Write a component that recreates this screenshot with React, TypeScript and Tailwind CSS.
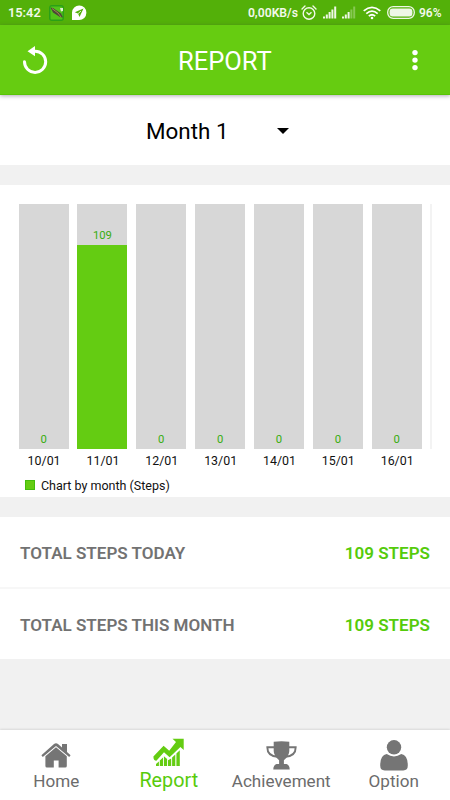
import { ReactNode } from "react";

const days = [
  { date: "10/01", steps: 0 },
  { date: "11/01", steps: 109 },
  { date: "12/01", steps: 0 },
  { date: "13/01", steps: 0 },
  { date: "14/01", steps: 0 },
  { date: "15/01", steps: 0 },
  { date: "16/01", steps: 0 },
];

const CHART_MAX = 131;

function SignalIcon({ strength }: { strength: number }) {
  return (
    <svg width="14" height="13" viewBox="0 0 14 13" fill="#fff">
      {[2, 4, 6.5, 9, 12].map((h, i) => (
        <rect
          key={h}
          x={i * 2.8}
          y={12.5 - h}
          width="2"
          height={h}
          opacity={i < strength ? 0.9 : 0.3}
        />
      ))}
    </svg>
  );
}

function StatusBar() {
  return (
    <div className="h-[25px] shrink-0 bg-[#53b009] flex items-center pl-[8px] pr-[8px] text-[12.2px] font-semibold text-[#f2f9ea]">
      <span className="w-[34px] pt-px text-[12.8px]">15:42</span>
      <svg className="ml-[7px]" width="15" height="16" viewBox="0 0 15 16">
        <rect width="15" height="16" rx="3" fill="#2aa017" />
        <rect x="1.5" y="1.5" width="12" height="13" rx="1" fill="#53c41a" />
        <path d="M1.5 2.5L4 3L12 8.5L14 12.5L11 12L4 7.5Z" fill="#4b4638" />
        <path d="M3 3.5L9 8L12 12" stroke="#b99a55" strokeWidth=".8" fill="none" />
        <path d="M11 3h3v3l-2 .5z" fill="#dff2d4" />
      </svg>
      <svg className="ml-[8px]" width="15" height="15" viewBox="0 0 15 15">
        <path d="M0 15V7.5A7.2 7.3 0 1 1 7.2 15Z" fill="#fff" />
        <path d="M11.5 3.5L2.8 7.3L6 8.5L7.5 12Z" fill="#53b009" />
        <path d="M6 8.7L9 6" stroke="#fff" strokeWidth=".8" />
      </svg>
      <span className="ml-auto pt-px">0,00KB/s</span>
      <svg className="ml-[3px]" width="16" height="16" viewBox="0 0 16 16" fill="none" stroke="#f2f9ea" strokeWidth="1.4">
        <circle cx="8" cy="8.5" r="5.8" />
        <path d="M1 4L4 1M15 4L12 1" strokeLinecap="round" />
        <path d="M5.5 7.2L8 9.5L10.5 7.2" />
      </svg>
      <div className="ml-[6px] flex gap-[5px]">
        <SignalIcon strength={5} />
        <SignalIcon strength={3} />
      </div>
      <svg className="ml-[7px]" width="18" height="14" viewBox="0 0 18 14" fill="none" stroke="#fff" strokeWidth="1.7">
        <path d="M.7 4.8Q9-2.2 17.3 4.8" />
        <path d="M3.3 7.6Q9 2.7 14.7 7.6" />
        <path d="M5.8 10.1Q9 7.4 12.2 10.1" />
        <circle cx="9" cy="12" r="1.3" fill="#fff" stroke="none" />
      </svg>
      <svg className="ml-[6px]" width="28" height="13" viewBox="0 0 28 13">
        <rect x=".7" y=".7" width="26.6" height="11.6" rx="5.5" fill="none" stroke="#eef7e6" strokeWidth="1.3" />
        <rect x="2.6" y="2.6" width="22.8" height="7.8" rx="3" fill="#eef7e6" />
      </svg>
      <span className="ml-[4px] w-[23px] pt-px whitespace-nowrap text-[12px]">96%</span>
    </div>
  );
}

function Header() {
  return (
    <header className="relative z-10 h-[70px] shrink-0 bg-[#66cc11] border-b border-[#58c506] shadow-[0_1px_4px_rgba(60,40,70,0.4)] grid grid-cols-[156px_1fr_35px] items-center pl-[22px] text-white">
      <svg width="26" height="29" viewBox="0 0 26 29">
        <path d="M2.5 16.7A10.6 10.6 0 1 0 13 6.2H11" fill="none" stroke="#fff" strokeWidth="3" strokeLinecap="round" />
        <path d="M5.5 6.2L13 1V11.2Z" fill="#fff" />
      </svg>
      <h1 className="pt-[5px] text-[25.5px] leading-none">REPORT</h1>
      <svg className="-ml-[5px]" width="10" height="22" viewBox="0 0 10 22" fill="#fff">
        <circle cx="5" cy="3.6" r="2.7" />
        <circle cx="5" cy="11.1" r="2.7" />
        <circle cx="5" cy="18.6" r="2.7" />
      </svg>
    </header>
  );
}

function Chart() {
  return (
    <div className="mt-[20px] h-[312px] shrink-0 bg-white pt-[19px] pl-[18.6px] overflow-hidden">
      <div className="flex gap-[8.85px]">
        {days.map((day) => (
          <div key={day.date} className="w-[50px] shrink-0">
            <div className="h-[244.5px] bg-[#d7d7d7] flex flex-col justify-end">
              <div className="text-center text-[11.3px] leading-[14px] pb-[2px] text-[#36ad0e]">
                {day.steps}
              </div>
              <div
                className="bg-[#64cc12]"
                style={{ height: `${(day.steps / CHART_MAX) * 100}%` }}
              />
            </div>
            <div className="mt-[4px] pl-px text-center text-[12.4px] leading-[15px] text-[#111]">
              {day.date}
            </div>
          </div>
        ))}
        <div className="h-[244.5px] w-[1.5px] -ml-[0.5px] shrink-0 bg-[#f3f3f3]" />
      </div>
      <div className="mt-[10px] ml-[6.4px] flex items-center gap-[6px] text-[12.5px] leading-[16px] text-[#111]">
        <span className="size-[10px] -mt-px bg-[#64cc12] border border-[#43bd0b]" />
        Chart by month (Steps)
      </div>
    </div>
  );
}

function TotalRow({ label, value }: { label: string; value: string }) {
  return (
    <div className="h-[70px] flex items-center justify-between px-[20px] pt-[2px] text-[17.05px] leading-[20px] font-semibold">
      <span className="text-[#727272]">{label}</span>
      <span className="text-[#55cb0b]">{value}</span>
    </div>
  );
}

function NavItem({
  label,
  active,
  children,
}: {
  label: string;
  active?: boolean;
  children: ReactNode;
}) {
  return (
    <div
      className={
        active
          ? "flex flex-col items-center pt-[8px] text-[#58cb0b] text-[19.8px] leading-[22px]"
          : "flex flex-col items-center pt-[9px] text-[#6c6c6c] text-[17.1px] leading-[20px]"
      }
    >
      <div className="h-[32px] flex">{children}</div>
      <span>{label}</span>
    </div>
  );
}

export default function App() {
  return (
    <div className="w-[450px] h-[800px] overflow-hidden bg-[#f1f1f1] flex flex-col font-['Roboto',sans-serif]">
      <StatusBar />
      <Header />
      <div className="h-[70px] shrink-0 bg-white flex items-center pl-[146px] text-[22.4px] text-black">
        <span className="w-[131px] pt-[4px]">Month 1</span>
        <svg className="mt-[2px]" width="12" height="6" viewBox="0 0 12 6">
          <path d="M0 0H12L6 6Z" />
        </svg>
      </div>
      <Chart />
      <div className="mt-[20px] shrink-0 bg-white">
        <TotalRow label="TOTAL STEPS TODAY" value="109 STEPS" />
        <div className="h-[2px] bg-[#f7f7f7]" />
        <TotalRow label="TOTAL STEPS THIS MONTH" value="109 STEPS" />
      </div>
      <nav className="mt-auto h-[70px] shrink-0 bg-white shadow-[0_-1px_2px_rgba(0,0,0,0.1)] grid grid-cols-4">
        <NavItem label="Home">
          <svg className="mt-[4px]" width="30" height="25" viewBox="0 0 30 25" fill="#757575">
            <path d="M15 .2Q16 .2 17 1.1L21 4.6V1H26V9L29.6 12.2L28.2 14L15 3L1.8 14L.4 12.2L13 1.1Q14 .2 15 .2Z" />
            <path d="M15 4.2L25.8 13.2V23Q25.8 24.6 24.2 24.6H17.6V17.5H12.8V24.6H6Q4.4 24.6 4.4 23V13.2Z" />
          </svg>
        </NavItem>
        <NavItem label="Report" active>
          <svg width="31" height="29" viewBox="0 0 31 29" fill="#64cc12">
            <path d="M19.5.7H30.7V12L27.4 9L16.6 19.3L11 14.3L3.4 22.8Q.4 22.8.4 18.4L10.6 7.8L16.2 12.8L23 4.1Z" />
            <path d="M3 28V26L5.9 23.5V28ZM6.8 28V22.6L10 19.5V28ZM10.9 28V18.2L14.1 21V28ZM15 28V22.2L18.2 20.5V28ZM19.1 28V19.5L22.3 16.5V28ZM23.4 28V15.4L26.8 12.2V28Z" />
          </svg>
        </NavItem>
        <NavItem label="Achievement">
          <svg className="mt-[2px]" width="31" height="29" viewBox="0 0 31 29" fill="#757575">
            <path d="M7.7.8Q15.5-.3 23.3.8V10Q23.3 14.5 17.9 19.3V23H20.5Q23.7 24.2 23.7 28.4H7.3Q7.3 24.2 10.5 23H13.1V19.3Q7.7 14.5 7.7 10Z" />
            <path d="M8 6.2H1.3Q1.3 15 11.5 15.8M23 6.2H29.7Q29.7 15 19.5 15.8" fill="none" stroke="#757575" strokeWidth="1.9" />
          </svg>
        </NavItem>
        <NavItem label="Option">
          <svg className="mt-[1px]" width="28" height="31" viewBox="0 0 28 31" fill="#757575">
            <circle cx="14" cy="7.3" r="7.2" />
            <path d="M6.7 14Q14 18.8 21.3 14Q27.8 15 27.8 25.5Q27.8 30.4 23.3 30.4H4.7Q.2 30.4.2 25.5Q.2 15 6.7 14Z" />
          </svg>
        </NavItem>
      </nav>
    </div>
  );
}
